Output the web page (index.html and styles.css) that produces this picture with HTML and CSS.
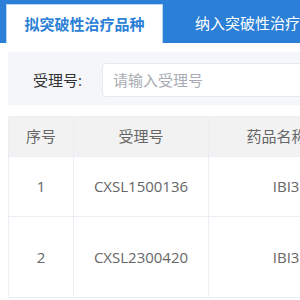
FILE: index.html
```html
<!DOCTYPE html>
<html lang="zh-CN">
<head>
    <meta charset="UTF-8">
    <meta name="viewport" content="width=device-width, initial-scale=1.0">
    <title>突破性治疗品种</title>
    <link rel="stylesheet" href="styles.css">
</head>
<body>
    <div class="tabs">
        <div class="tab active">拟突破性治疗品种</div>
        <div class="tab">纳入突破性治疗品种</div>
    </div>

    <div class="search">
        <label for="acceptNo">受理号:</label>
        <input id="acceptNo" type="text" placeholder="请输入受理号">
    </div>

    <table class="list">
        <thead>
            <tr>
                <th class="col-no">序号</th>
                <th class="col-id">受理号</th>
                <th class="col-name">药品名称及剂型</th>
                <th>申请人</th>
            </tr>
        </thead>
        <tbody>
            <tr>
                <td>1</td>
                <td>CXSL1500136</td>
                <td>IBI3001</td>
                <td>信达生物制药（苏州）有限公司</td>
            </tr>
            <tr>
                <td>2</td>
                <td>CXSL2300420</td>
                <td>IBI3110</td>
                <td>信达生物制药（苏州）有限公司<br>信达生物（上海）有限公司</td>
            </tr>
        </tbody>
    </table>
</body>
</html>
```

FILE: styles.css
```css
body {
    margin: 0;
    width: 300px;
    overflow: hidden;
    font-family: "Open Sans", "Noto Sans CJK SC", sans-serif;
    font-size: 14px;
    color: #606266;
    background: #fff;
}

.tabs {
    display: flex;
    align-items: flex-end;
    height: 43px;
    padding-left: 6px;
    background-color: #2b7fd6;
    box-sizing: border-box;
}
.tab {
    flex-shrink: 0;
    height: 39px;
    line-height: 39px;
    padding: 0 32px;
    color: #fff;
    font-size: 15px;
    white-space: nowrap;
}
.tab.active {
    width: 157px;
    padding: 0;
    text-align: center;
    background-color: #fff;
    color: #2b7fd6;
    font-weight: 700;
    border: 1px solid #b9d5f2;
    border-bottom: none;
    box-sizing: border-box;
}

.search {
    display: flex;
    align-items: center;
    height: 53px;
    margin: 9px 0 0 8px;
    padding: 2px 0 0 25px;
    background-color: #f4f6fa;
    white-space: nowrap;
    box-sizing: border-box;
}
.search label {
    width: 69px;
    flex-shrink: 0;
    font-size: 15px;
    color: #333;
}
.search input {
    flex-shrink: 0;
    width: 260px;
    height: 34px;
    padding: 0 10px;
    border: 1px solid #e6e9ef;
    border-radius: 4px;
    box-sizing: border-box;
    font-family: inherit;
    font-size: 15px;
    color: #606266;
    outline: none;
}
.search input::placeholder {
    color: #a8abb2;
}

.list {
    margin: 11px 0 0 8px;
    border-collapse: collapse;
    table-layout: fixed;
    width: 700px;
}
.list th,
.list td {
    border: 1px solid #ebeef5;
    text-align: center;
    line-height: 21px;
    white-space: nowrap;
}
.list th {
    height: 39px;
    padding: 0;
    background-color: #f2f2f2;
    font-weight: 400;
    font-size: 15px;
    color: #666;
}
.list td {
    padding: 19px 0;
    font-size: 15px;
    color: #666;
}
.col-no { width: 64px; }
.col-id { width: 134px; }
.col-name { width: 180px; }
```
